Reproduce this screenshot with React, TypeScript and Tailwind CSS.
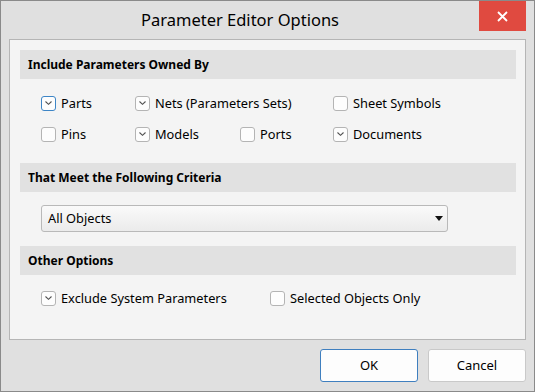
import React from "react";

const font = { fontFamily: '"Noto Sans", "Open Sans", sans-serif' };

function Check({ checked, focused }: { checked?: boolean; focused?: boolean }) {
  return (
    <span
      className={
        "flex h-[15px] w-[15px] shrink-0 items-center justify-center rounded-[3px] border bg-[#fdfdfd] " +
        (focused ? "border-[#3d85c6]" : "border-[#b4b4b4]")
      }
    >
      {checked && (
        <svg width="9" height="6" viewBox="0 0 9 6">
          <path d="M1.5 1.5 L4.5 4.3 L7.5 1.5" fill="none" stroke="#505050" strokeWidth="1.1" />
        </svg>
      )}
    </span>
  );
}

function Item({ label, checked, focused, w }: { label: string; checked?: boolean; focused?: boolean; w: string }) {
  return (
    <div className={"flex items-center gap-[5px] " + w}>
      <Check checked={checked} focused={focused} />
      <span className="text-[12.8px] leading-[16px] text-black">{label}</span>
    </div>
  );
}

function Header({ children }: { children: React.ReactNode }) {
  return (
    <div className="flex h-[29px] items-center bg-[#e1e1e1] pl-[8px] text-[12px] font-bold text-black">
      {children}
    </div>
  );
}

export default function App() {
  return (
    <div style={font} className="flex h-[392px] w-[535px] flex-col border border-[#8a8a8a] bg-[#e0e0e0]">
      <div className="flex h-[38px] items-start">
        <div className="flex-1 pt-[7px] text-center text-[16.5px] leading-[24px] text-black">Parameter Editor Options</div>
        <div className="flex h-[30px] w-[47px] items-center justify-center bg-[#e04a40]">
          <svg width="11" height="11" viewBox="0 0 11 11">
            <path d="M1 1 L10 10 M10 1 L1 10" stroke="#fff" strokeWidth="1.8" />
          </svg>
        </div>
        <div className="w-[8px]" />
      </div>
      <div className="mx-[8px] flex h-[301px] flex-col border border-[#b5b5b5] bg-[#f4f4f4] pl-[10px] pr-[9px] pt-[10px]">
        <Header>Include Parameters Owned By</Header>
        <div className="flex flex-col gap-[15px] pl-[21px] pt-[16px]">
          <div className="flex">
            <Item label="Parts" checked focused w="w-[94px]" />
            <Item label="Nets (Parameters Sets)" checked w="w-[198px]" />
            <Item label="Sheet Symbols" w="w-[120px]" />
          </div>
          <div className="flex">
            <Item label="Pins" w="w-[94px]" />
            <Item label="Models" checked w="w-[105px]" />
            <Item label="Ports" w="w-[93px]" />
            <Item label="Documents" checked w="w-[120px]" />
          </div>
        </div>
        <div className="pt-[21px]">
          <Header>That Meet the Following Criteria</Header>
        </div>
        <div className="pl-[21px] pt-[13px]">
          <div className="flex h-[27px] w-[407px] items-center justify-between rounded-[3px] border border-[#b9b9b9] bg-gradient-to-b from-[#fafafa] to-[#ebebeb] pl-[6px] pr-[4px]">
            <span className="text-[12.8px] text-black">All Objects</span>
            <svg width="8" height="5" viewBox="0 0 8 5">
              <path d="M0 0 L8 0 L4 5 Z" fill="#111" />
            </svg>
          </div>
        </div>
        <div className="pt-[14px]">
          <Header>Other Options</Header>
        </div>
        <div className="flex pl-[21px] pt-[15px]">
          <Item label="Exclude System Parameters" checked w="w-[229px]" />
          <Item label="Selected Objects Only" w="w-[180px]" />
        </div>
      </div>
      <div className="flex justify-end gap-[10px] pr-[8px] pt-[9px]">
        <button className="h-[33px] w-[98px] rounded-[3px] border border-[#3f7fbf] bg-[#fdfdfd] text-[13px] text-black">OK</button>
        <button className="h-[33px] w-[98px] rounded-[3px] border border-[#c9c9c9] bg-[#fdfdfd] text-[13px] text-black">Cancel</button>
      </div>
    </div>
  );
}
